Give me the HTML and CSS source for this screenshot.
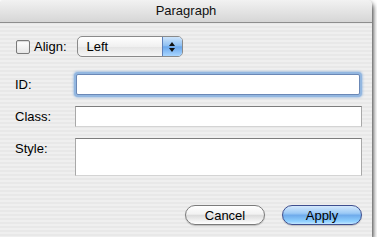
FILE: index.html
```html
<!DOCTYPE html>
<html lang="en">
<head>
  <meta charset="UTF-8" />
  <title>Paragraph</title>
  <link rel="stylesheet" href="styles.css">
</head>
<body>
  <div class="window">
    <div class="titlebar">Paragraph</div>

    <div class="content">
      <div class="align-row">
        <span class="checkbox"></span>
        <span class="align-label">Align:</span>
        <div class="popup">
          <span class="popup-value">Left</span>
          <span class="popup-arrows">
            <svg width="8" height="12" viewBox="0 0 8 12">
              <path d="M4 1 L7 5 L1 5 Z" fill="#111"/>
              <path d="M1 7 L7 7 L4 11 Z" fill="#111"/>
            </svg>
          </span>
        </div>
      </div>

      <div class="fields">
        <label class="label">ID:</label>
        <div class="field focused"></div>

        <label class="label">Class:</label>
        <div class="field"></div>

        <label class="label label-top">Style:</label>
        <div class="field area"></div>
      </div>

      <div class="buttons">
        <button class="btn">Cancel</button>
        <button class="btn btn-default">Apply</button>
      </div>
    </div>
  </div>
</body>
</html>
```

FILE: styles.css
```css
* {
  box-sizing: border-box;
  margin: 0;
  padding: 0;
}

body {
  background: #fff;
  font-family: 'Liberation Sans', Arial, sans-serif;
  font-size: 13px;
  color: #000;
}

.window {
  width: 372px;
  height: 237px;
  border-radius: 5px 5px 0 0;
  overflow: hidden;
  background: repeating-linear-gradient(to bottom, #efefef 0, #efefef 2px, #e8e8e8 2px, #e8e8e8 4px);
  box-shadow: 1px 3px 5px rgba(0, 0, 0, 0.85);
  display: flex;
  flex-direction: column;
}

.titlebar {
  height: 23px;
  line-height: 22px;
  text-align: center;
  background: linear-gradient(to bottom, #f2f2f2, #d6d6d6);
  border-bottom: 1px solid #8e8e8e;
  color: #111;
}

.content {
  padding: 13px 10px 0 16px;
  display: flex;
  flex-direction: column;
  flex: 1;
}

.align-row {
  display: flex;
  align-items: center;
  height: 21px;
}

.checkbox {
  width: 14px;
  height: 14px;
  border: 1px solid #7a7a7a;
  border-radius: 2px;
  background: linear-gradient(to bottom, #ffffff, #e6e6e6);
  box-shadow: inset 0 1px 1px rgba(0, 0, 0, 0.15);
}

.align-label {
  margin-left: 4px;
  margin-right: 10px;
}

.popup {
  width: 106px;
  height: 21px;
  display: flex;
  border: 1px solid #8a8a8a;
  border-radius: 5px;
  overflow: hidden;
  background: linear-gradient(to bottom, #ffffff, #f0f0f0 50%, #e4e4e4 51%, #f6f6f6);
}

.popup-value {
  flex: 1;
  padding-left: 9px;
  line-height: 19px;
}

.popup-arrows {
  width: 20px;
  display: flex;
  align-items: center;
  justify-content: center;
  border-left: 1px solid #5d7fb8;
  background: linear-gradient(to bottom, #cde4fb, #8fc0f2 45%, #6aa7ec 52%, #a9d6ff);
}

.fields {
  margin-top: 17px;
  margin-left: -1px;
  display: grid;
  grid-template-columns: 60px 1fr;
  row-gap: 11px;
}

.label {
  display: flex;
  align-items: center;
}

.label-top {
  align-items: flex-start;
  padding-top: 3px;
}

.field {
  height: 21px;
  background: #fff;
  border: 1px solid #a8a8a8;
  border-top-color: #7d7d7d;
  border-bottom-color: #d4d4d4;
}

.field.focused {
  margin: 0 2px 0 1px;
  border: 1px solid #6b88b6;
  box-shadow: 0 0 0 2px #93b7e0, 0 0 2px 3px rgba(120, 165, 220, 0.5);
  border-radius: 2px;
}

.area {
  height: 38px;
}

.buttons {
  margin-top: 29px;
  display: flex;
  justify-content: flex-end;
  gap: 17px;
}

.btn {
  width: 80px;
  height: 20px;
  border-radius: 10px;
  border: 1px solid #7b7b7b;
  font-family: inherit;
  font-size: 13px;
  color: #000;
  background: linear-gradient(to bottom, #ffffff, #f2f2f2 45%, #dcdcdc 52%, #f4f4f4 85%, #ffffff);
  box-shadow: 0 1px 1px rgba(0, 0, 0, 0.2);
}

.btn-default {
  border-color: #3f4f8f;
  background: linear-gradient(to bottom, #d4e8fc, #9ccaf6 40%, #6fabeb 52%, #8fd0ff 85%, #c2e6ff);
}
```
